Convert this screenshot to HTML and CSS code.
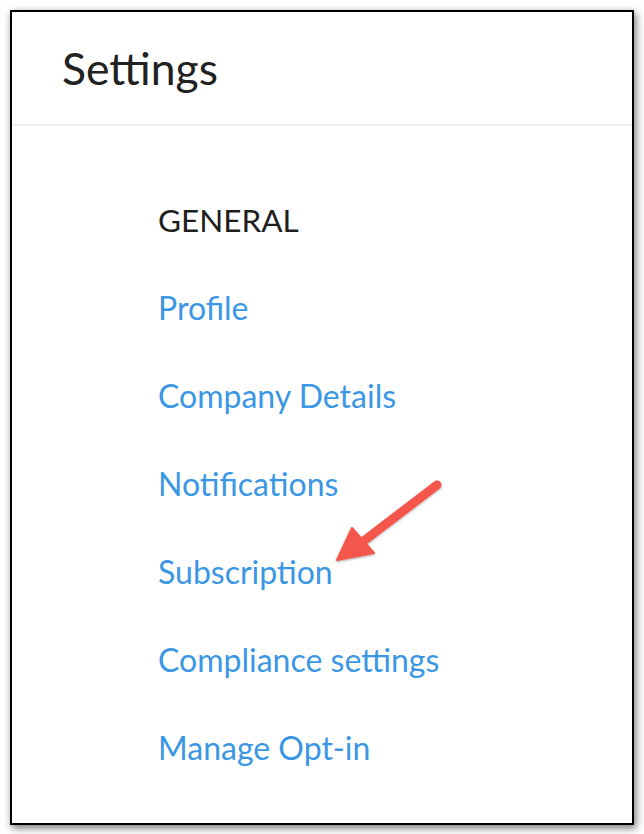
FILE: index.html
```html
<!DOCTYPE html>
<html lang="en">
<head>
  <meta charset="UTF-8" />
  <meta name="viewport" content="width=device-width, initial-scale=1.0"/>
  <title>Settings</title>
  <link rel="stylesheet" href="styles.css">
</head>
<body>

<div class="window">
  <!-- Header -->
  <div class="header">
    <h1>Settings</h1>
  </div>

  <!-- Menu -->
  <nav class="menu">
    <h2>GENERAL</h2>
    <a href="#">Profile</a>
    <a href="#">Company Details</a>
    <a href="#">Notifications</a>
    <a href="#">Subscription</a>
    <a href="#">Compliance settings</a>
    <a href="#">Manage Opt-in</a>
  </nav>

  <!-- Annotation arrow -->
  <svg class="arrow" width="130" height="100" viewBox="0 0 130 100">
    <defs>
      <filter id="shade" x="-20%" y="-20%" width="140%" height="140%">
        <feDropShadow dx="0" dy="1" stdDeviation="1.2" flood-color="#000" flood-opacity="0.35"/>
      </filter>
    </defs>
    <g filter="url(#shade)" fill="#f4564b" stroke="#f4564b" stroke-linecap="round" stroke-linejoin="round">
      <line x1="112" y1="12" x2="36" y2="70" stroke-width="9"/>
      <polygon points="12,87 27,55 49,80" stroke-width="2"/>
    </g>
  </svg>
</div>

</body>
</html>
```

FILE: styles.css
```css
* { margin: 0; padding: 0; box-sizing: border-box; }

body {
  font-family: 'Lato', 'Noto Sans', sans-serif;
  background: #fff;
  padding: 10px;
  height: 834px;
}

.window {
  position: relative;
  height: 815px;
  border: 2px solid #000;
  background: #fff;
  box-shadow: 2px 3px 8px rgba(0,0,0,0.55);
}

.header {
  height: 114px;
  padding: 28px 0 0 50px;
  border-bottom: 2px solid #eef1f1;
}

.header h1 {
  font-size: 44.5px;
  font-weight: 400;
  color: #222;
  line-height: 56px;
}

.menu {
  display: flex;
  flex-direction: column;
  padding: 74px 0 0 146px;
}

.menu h2 {
  font-size: 31.5px;
  font-weight: 400;
  color: #1e1e1e;
  line-height: 40px;
  margin-bottom: 48px;
}

.menu a {
  font-size: 32px;
  color: #3b97e3;
  text-decoration: none;
  line-height: 40px;
  margin-bottom: 48px;
}

.arrow {
  position: absolute;
  left: 313px;
  top: 461px;
}
```
